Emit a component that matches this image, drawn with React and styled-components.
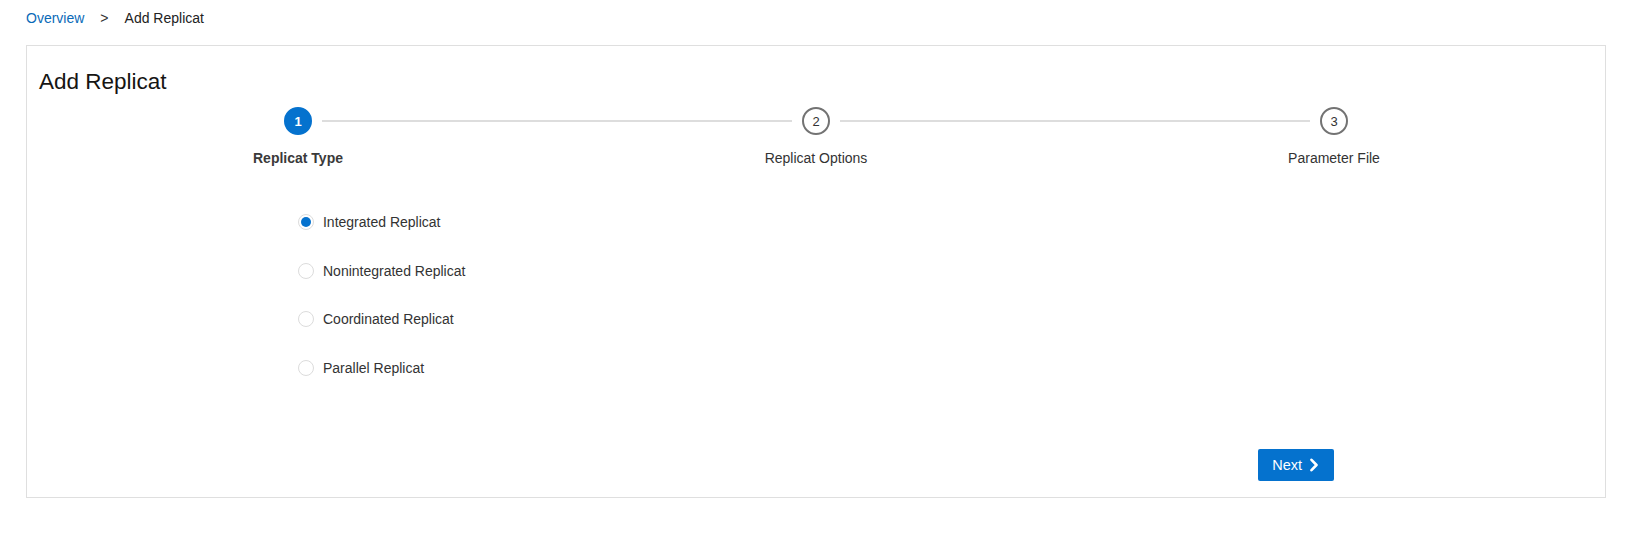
import React, { useState } from "react";
import styled, { createGlobalStyle } from "styled-components";

const GlobalStyle = createGlobalStyle`
  html, body {
    margin: 0;
    padding: 0;
    background: #ffffff;
    font-family: "Liberation Sans", Arial, sans-serif;
    color: #333333;
  }
  * { box-sizing: border-box; }
`;

const Page = styled.div`
  padding: 8px 34px 0 26px;
`;

const Breadcrumb = styled.nav`
  display: flex;
  align-items: center;
  font-size: 14px;
  line-height: 20px;
  height: 20px;
`;

const Crumb = styled.a`
  color: #0a6ab8;
  text-decoration: none;
  cursor: pointer;
`;

const Separator = styled.span`
  margin: 0 16px;
  color: #333333;
`;

const Current = styled.span`
  color: #222222;
`;

const Card = styled.section`
  margin-top: 17px;
  border: 1px solid #dfdfdf;
  padding: 22px 12px 16px;
`;

const Title = styled.h1`
  margin: 0;
  font-size: 22.5px;
  line-height: 28px;
  font-weight: 400;
  color: #161513;
`;

const Train = styled.div`
  display: grid;
  grid-template-columns: repeat(3, 1fr);
  margin-top: 11px;
`;

const Step = styled.div`
  display: flex;
  flex-direction: column;
  align-items: center;
`;

const Track = styled.div`
  display: flex;
  align-items: center;
  width: 100%;
  height: 28px;
`;

const Connector = styled.span`
  flex: 1;
  height: 2px;
  background: #dddddd;
  visibility: ${(p) => (p.$hidden ? "hidden" : "visible")};
  margin: ${(p) => (p.$side === "left" ? "0 10px 0 0" : "0 0 0 10px")};
`;

const StepCircle = styled.span`
  width: 28px;
  height: 28px;
  border-radius: 50%;
  display: flex;
  align-items: center;
  justify-content: center;
  font-size: 13px;
  flex: none;
  background: ${(p) => (p.$active ? "#0572ce" : "#ffffff")};
  color: ${(p) => (p.$active ? "#ffffff" : "#333333")};
  border: 2px solid ${(p) => (p.$active ? "#0572ce" : "#737373")};
  font-weight: ${(p) => (p.$active ? 700 : 400)};
`;

const StepLabel = styled.span`
  margin-top: 13px;
  font-size: 14px;
  line-height: 20px;
  color: ${(p) => (p.$active ? "#3a3a3a" : "#333333")};
  font-weight: ${(p) => (p.$active ? 700 : 400)};
`;

const Body = styled.div`
  margin: 0 calc(100% / 6);
`;

const RadioGroup = styled.div`
  display: flex;
  flex-direction: column;
  gap: 28.5px;
  margin-top: 44px;
`;

const RadioRow = styled.label`
  display: flex;
  align-items: center;
  height: 20px;
  font-size: 14px;
  color: #333333;
  cursor: pointer;
`;

const RadioDot = styled.span`
  width: 16px;
  height: 16px;
  border-radius: 50%;
  border: 1px solid #dcdcdc;
  background: #ffffff;
  display: flex;
  align-items: center;
  justify-content: center;
  margin-right: 9px;
  flex: none;
  &::after {
    content: "";
    width: 10px;
    height: 10px;
    border-radius: 50%;
    background: #0572ce;
    display: ${(p) => (p.$checked ? "block" : "none")};
  }
`;

const Footer = styled.div`
  display: flex;
  justify-content: flex-end;
  margin-top: 71px;
`;

const NextButton = styled.button`
  display: flex;
  align-items: center;
  gap: 7px;
  height: 32px;
  padding: 0 15px 0 14px;
  border: none;
  border-radius: 2px;
  background: #0572ce;
  color: #ffffff;
  font-family: inherit;
  font-size: 14.5px;
  font-weight: 400;
  cursor: pointer;
`;

const steps = [
  { n: 1, label: "Replicat Type" },
  { n: 2, label: "Replicat Options" },
  { n: 3, label: "Parameter File" },
];

const options = [
  "Integrated Replicat",
  "Nonintegrated Replicat",
  "Coordinated Replicat",
  "Parallel Replicat",
];

export default function App() {
  const [selected, setSelected] = useState(0);
  const current = 0;
  return (
    <>
      <GlobalStyle />
      <Page>
        <Breadcrumb>
          <Crumb>Overview</Crumb>
          <Separator>&gt;</Separator>
          <Current>Add Replicat</Current>
        </Breadcrumb>
        <Card>
          <Title>Add Replicat</Title>
          <Train>
            {steps.map((s, i) => (
              <Step key={s.n}>
                <Track>
                  <Connector $side="left" $hidden={i === 0} />
                  <StepCircle $active={i === current}>{s.n}</StepCircle>
                  <Connector $side="right" $hidden={i === steps.length - 1} />
                </Track>
                <StepLabel $active={i === current}>{s.label}</StepLabel>
              </Step>
            ))}
          </Train>
          <Body>
            <RadioGroup>
              {options.map((o, i) => (
                <RadioRow key={o} onClick={() => setSelected(i)}>
                  <RadioDot $checked={selected === i} />
                  {o}
                </RadioRow>
              ))}
            </RadioGroup>
            <Footer>
              <NextButton>
                Next
                <svg width="10" height="14" viewBox="0 0 10 14" fill="none">
                  <path d="M2.5 1.8 L7.5 7 L2.5 12.2" stroke="#ffffff" strokeWidth="2.6" strokeLinecap="round" strokeLinejoin="round" />
                </svg>
              </NextButton>
            </Footer>
          </Body>
        </Card>
      </Page>
    </>
  );
}
